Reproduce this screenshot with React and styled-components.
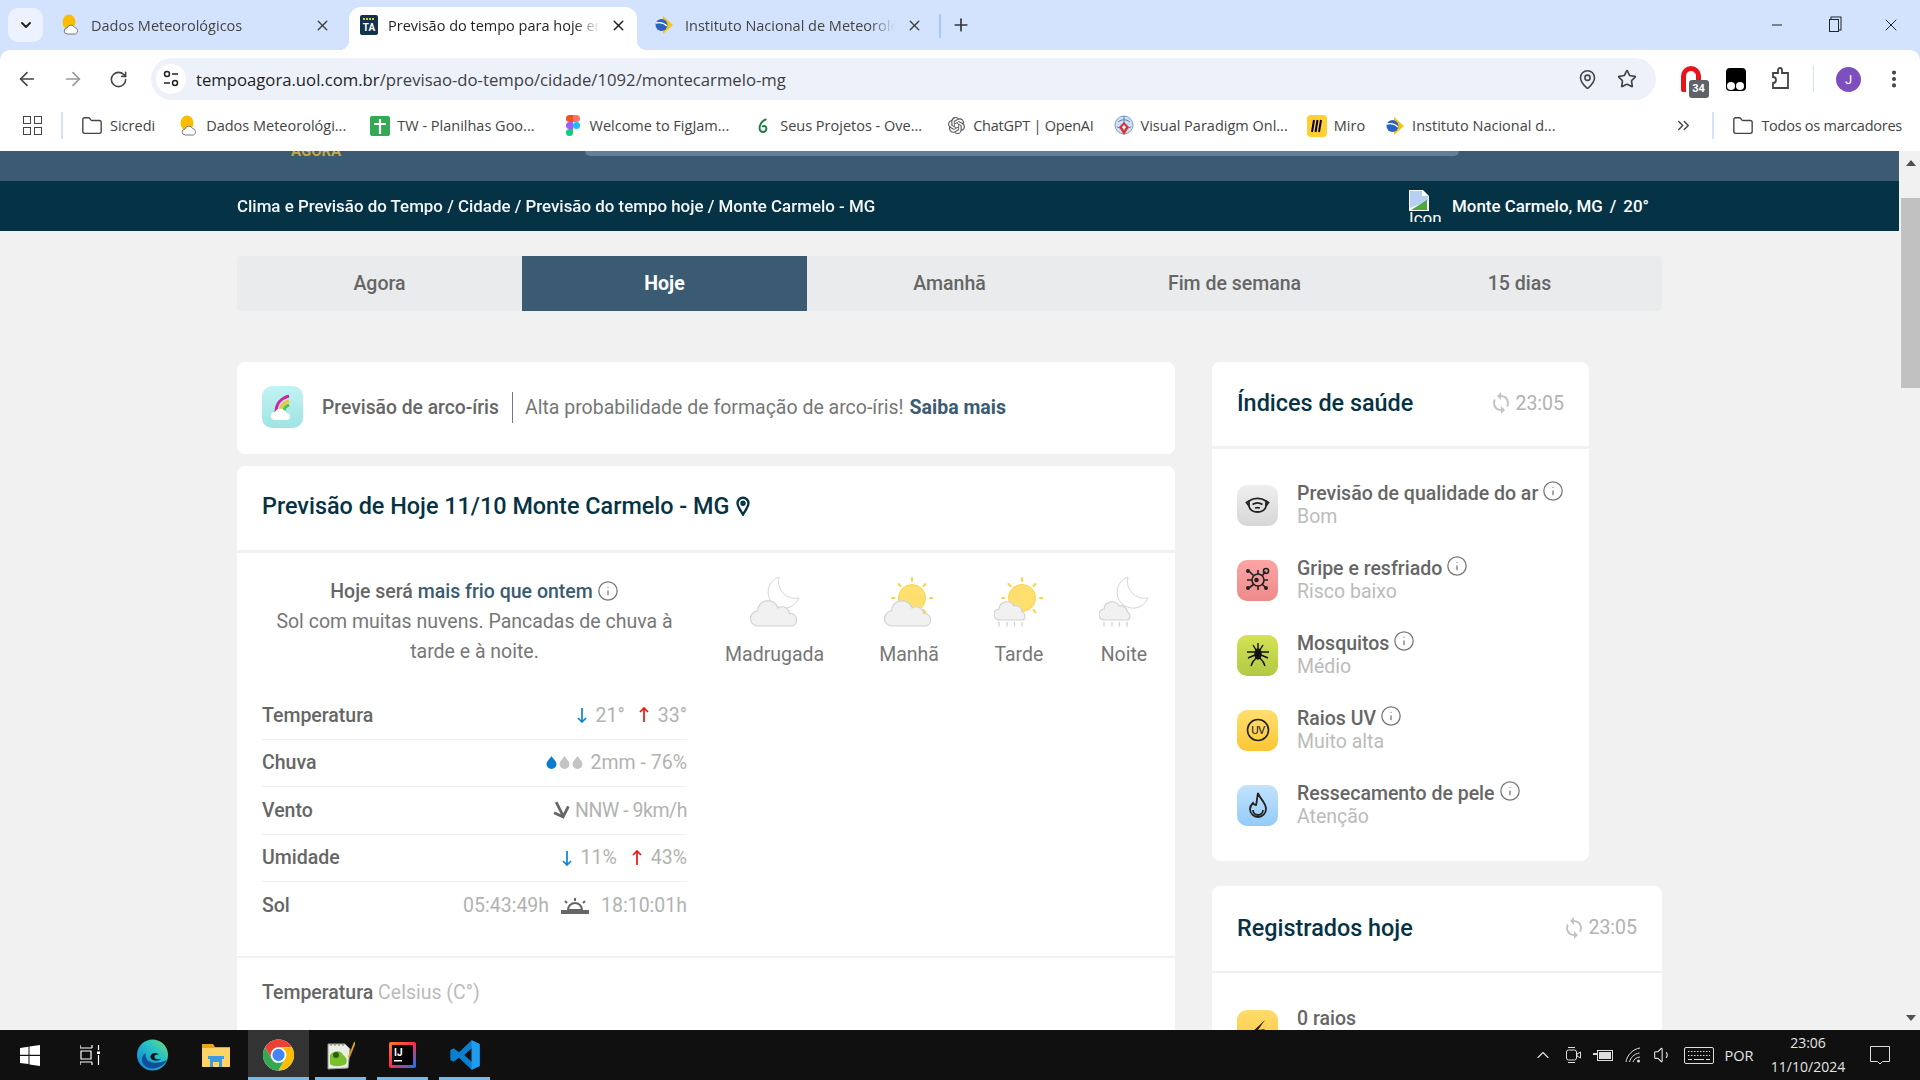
import styled, { createGlobalStyle } from "styled-components";
import {
  ArrowLeft,
  ArrowRight,
  ChevronDown,
  ChevronUp,
  ChevronsRight,
  EllipsisVertical,
  Folder,
  Info,
  MapPin,
  Minus,
  Plus,
  RotateCw,
  Star,
  Volume1,
  X,
} from "lucide-react";
import { MdSync } from "react-icons/md";
import { SiOpenai } from "react-icons/si";

const GlobalStyle = createGlobalStyle`
  html, body { margin: 0; padding: 0; overflow: hidden; background: #f1f1f1; }
  * { box-sizing: border-box; }
`;

/* favicons and small drawings */

const SunCloudFav = () => (
  <svg width="18" height="22" viewBox="0 0 18 22">
    <ellipse cx="7" cy="8" rx="6.5" ry="7.5" fill="#fbbc04" />
    <path d="M5.500 20a3 3 0 0 1-.5-6 4 4 0 0 1 7.500-.5 3.400 3.400 0 0 1 1 6.500z" fill="#fff" stroke="#777" />
  </svg>
);

const InmetFav = () => (
  <svg width="20" height="20" viewBox="0 0 20 20">
    <path d="M9 1l10 9-10 9z" fill="#f5c518" />
    <circle cx="7.500" cy="10" r="6" fill="#2a62c4" />
    <path d="M2 8c4-1 8 0 11 3" stroke="#fff" strokeWidth="1.400" fill="none" />
  </svg>
);

const TaFav = () => (
  <svg width="18" height="20" viewBox="0 0 18 20">
    <rect width="18" height="20" rx="2" fill="#12344a" />
    <path d="M3 4h12" stroke="#e5c14a" strokeWidth="2" strokeDasharray="2 1" />
    <text x="9" y="16" fontSize="10" fontWeight="700" fill="#fff" textAnchor="middle" fontFamily="Roboto, sans-serif">TA</text>
  </svg>
);

const SheetsFav = () => (
  <svg width="20" height="20" viewBox="0 0 20 20">
    <rect width="20" height="20" rx="2" fill="#34a853" />
    <path d="M10 3v15M4 8h12" stroke="#fff" strokeWidth="2.200" />
  </svg>
);

const FigmaFav = () => (
  <svg width="14" height="21" viewBox="0 0 14 21">
    <path d="M3.500 0H7v7H3.500a3.500 3.500 0 0 1 0-7z" fill="#f24e1e" />
    <path d="M7 0h3.500a3.500 3.500 0 0 1 0 7H7z" fill="#ff7262" />
    <path d="M3.500 7H7v7H3.500a3.500 3.500 0 0 1 0-7z" fill="#a259ff" />
    <circle cx="10.500" cy="10.500" r="3.500" fill="#1abcfe" />
    <path d="M3.500 14H7v3.500a3.500 3.500 0 1 1-3.500-3.500z" fill="#0acf83" />
  </svg>
);

const LeafFav = () => (
  <svg width="12" height="20" viewBox="0 0 14 20">
    <path d="M11 2C6 4 3 8 3 13a4 4 0 1 0 8 0c0-3-3-4-5-2" fill="none" stroke="#1d7a45" strokeWidth="2.200" />
  </svg>
);

const VpFav = () => (
  <svg width="20" height="22" viewBox="0 0 20 22">
    <circle cx="10" cy="10" r="9" fill="#cfe0f2" stroke="#7f9fc4" />
    <path d="M4 7c4-3 8-3 12 0M3 12c4 2 10 2 14 0M10 1v18" stroke="#5a84b8" fill="none" />
    <path d="M10 7l5 5-5 8-5-8z" fill="#d8323c" />
    <path d="M10 10l2 2-2 3-2-3z" fill="#fff" />
  </svg>
);

const MiroFav = () => (
  <svg width="20" height="22" viewBox="0 0 20 22">
    <rect width="20" height="22" rx="4" fill="#ffd02f" />
    <path d="M7 5L5 17M10.500 5L8.500 17M14 5l-2 12" stroke="#050038" strokeWidth="2" />
  </svg>
);

const TaskViewIcon = () => (
  <svg width="20" height="20" viewBox="0 0 20 20" fill="none" stroke="#fff" strokeWidth="1.200">
    <path d="M0 3h12M0 3V0M12 3V0M1 6h10v8H1zM0 17h12M0 17v3M12 17v3" />
    <path d="M18.500 0v5M18.500 10v10" />
    <rect x="17" y="6.500" width="3" height="2.500" fill="#fff" stroke="none" />
  </svg>
);

const WindowsIcon = () => (
  <svg width="20" height="21" viewBox="0 0 20 21" fill="#fff">
    <path d="M0 3l8.500-1.200v8H0zM9.500 1.600L20 0v9.800H9.500zM0 11h8.500v8L0 17.900zM9.500 11H20v10L9.500 19.400z" />
  </svg>
);

const EdgeIcon = () => (
  <svg width="31" height="32" viewBox="0 0 32 32">
    <defs>
      <linearGradient id="edgeA" x1="0" y1="1" x2="1" y2="0">
        <stop offset="0" stopColor="#0c7fd6" />
        <stop offset="0.600" stopColor="#27c2c8" />
        <stop offset="1" stopColor="#6fdc6b" />
      </linearGradient>
    </defs>
    <circle cx="16" cy="16" r="16" fill="url(#edgeA)" />
    <path d="M31 21c-3 7-13 11-20 8C4 26 3 18 9 14c-1 5 2 10 9 10 5 0 10-1 13-3z" fill="#0f4f9a" />
    <path d="M14 17c1-4 7-4 9-1-3-1-5 0-5 2 0 2 3 3 7 2-3 3-12 2-11-3z" fill="#111" />
  </svg>
);

const ExplorerIcon = () => (
  <svg width="28" height="24" viewBox="0 0 28 24">
    <path d="M0 1h11l2 3h15v18a2 2 0 0 1-2 2H1a1 1 0 0 1-1-1z" fill="#e6a818" />
    <rect y="5" width="28" height="19" rx="1" fill="#ffd466" />
    <path d="M8 24v-8h12v8h-3v-5h-6v5z" fill="#3f9be0" />
    <rect x="6" y="13" width="16" height="3" fill="#3f9be0" />
  </svg>
);

const ChromeIcon = () => (
  <svg width="31" height="32" viewBox="0 0 48 48">
    <circle cx="24" cy="24" r="24" fill="#fff" />
    <path d="M24 12h20.800A24 24 0 0 0 3.200 12l10.400 18A12 12 0 0 1 24 12z" fill="#ea4335" />
    <path d="M13.600 30L3.200 12A24 24 0 0 0 24 48l10.400-18a12 12 0 0 1-20.800 0z" fill="#34a853" />
    <path d="M34.400 30L24 48a24 24 0 0 0 20.800-36H24a12 12 0 0 1 10.400 18z" fill="#fbbc04" />
    <circle cx="24" cy="24" r="9.500" fill="#4285f4" />
  </svg>
);

const NotepadIcon = () => (
  <svg width="28" height="29" viewBox="0 0 28 29">
    <path d="M1 3h17l5 5-2 19-20 1z" fill="#e9efe2" stroke="#999" />
    <path d="M4 2v3M8 2v3M12 2v3M16 2v3" stroke="#777" />
    <path d="M3 14c5-6 12-4 13 0 3 2 5 5 3 9-5 3-13 3-16 0z" fill="#7ac02c" />
    <circle cx="9" cy="14" r="3" fill="#2b5d12" />
    <path d="M22 16L28 1" stroke="#d99a1e" strokeWidth="2" />
  </svg>
);

const IdeaIcon = () => (
  <svg width="27" height="26" viewBox="0 0 27 26">
    <defs>
      <linearGradient id="ideaA" x1="0" y1="0" x2="1" y2="1">
        <stop offset="0" stopColor="#fc801d" />
        <stop offset="0.500" stopColor="#fe2857" />
        <stop offset="1" stopColor="#087cfa" />
      </linearGradient>
    </defs>
    <rect width="27" height="26" rx="2" fill="url(#ideaA)" />
    <rect x="3" y="3" width="21" height="20" fill="#000" />
    <text x="5" y="14" fontSize="10" fontWeight="700" fill="#fff" fontFamily="Roboto, sans-serif">IJ</text>
    <rect x="5" y="18" width="8" height="1.500" fill="#fff" />
  </svg>
);

const VsCodeIcon = () => (
  <svg width="34" height="32" viewBox="0 0 24 24">
    <path fillRule="evenodd" d="M17 1l6 2.800v16.400L17 23 7.500 14l-4 3L1 15.800V8.200L3.500 7l4 3zM17 7l-5.500 5 5.500 5z" fill="#0a7fd0" />
    <path fillRule="evenodd" d="M17 1l6 2.800v16.400L17 23z" fill="#1f9cf0" />
  </svg>
);

const MoonShape = ({ x, y }) => (
  <path
    transform={`translate(${x} ${y})`}
    d="M11 0A16 16 0 1 0 31 21 17 17 0 0 1 11 0z"
    fill="#fff"
    stroke="#d6d6d6"
  />
);

const SunShape = () => (
  <g>
    <circle cx="28" cy="21" r="13.500" fill="#ffe06f" stroke="#fcd24a" />
    <g stroke="#fcd24a" strokeWidth="2" strokeLinecap="round">
      <path d="M28 1v3M14.500 7l2 2M41.500 7l-2 2M8 21h2.500M46 21h2.500M39.500 33l2 2.500" />
    </g>
  </g>
);

const BigCloud = () => (
  <path
    d="M8 49a7.500 7.500 0 0 1-1-15 10.500 10.500 0 0 1 20.500-3 7.500 7.500 0 0 1 11.500 5.500 6.500 6.500 0 0 1 3 12.500z"
    transform="translate(0.500 0)"
    fill="#f1f1f1"
    stroke="#d2d2d2"
    strokeWidth="1.200"
  />
);

const RainCloud = () => (
  <g>
    <path
      d="M6 43a5.500 5.500 0 0 1-1-11 8 8 0 0 1 15-3 6 6 0 0 1 8 5.500 5 5 0 0 1 1 8.500z"
      fill="#f1f1f1"
      stroke="#d2d2d2"
      strokeWidth="1.200"
    />
    <path d="M5 45v4.500M13 45v4.500M20.500 45v4.500M28 45v4.500" stroke="#d2d2d2" strokeWidth="1.300" />
  </g>
);

const WeatherIcon = ({ kind }) => (
  <svg width="50" height="50" viewBox="0 0 50 50">
    {kind === "moonCloud" && (
      <>
        <MoonShape x={18} y={0} />
        <BigCloud />
      </>
    )}
    {kind === "sunCloud" && (
      <>
        <SunShape />
        <BigCloud />
      </>
    )}
    {kind === "sunRain" && (
      <>
        <SunShape />
        <RainCloud />
      </>
    )}
    {kind === "moonRain" && (
      <>
        <MoonShape x={18} y={0} />
        <RainCloud />
      </>
    )}
  </svg>
);

const RainbowIcon = () => (
  <svg width="24" height="28" viewBox="0 0 24 28" fill="none">
    <path d="M5 19c0-8 5-14 13-16" stroke="#d61fa0" strokeWidth="3" />
    <path d="M9 19c0-6 4-10 9-11" stroke="#f4c430" strokeWidth="3" />
    <path d="M13 18c0-3 2-5 5-6" stroke="#58c14a" strokeWidth="3" />
    <path d="M4 27a4 4 0 0 1 0-8 6 6 0 0 1 11 1 3.500 3.500 0 0 1 1 7z" fill="#fff" />
  </svg>
);

const MaskIcon = () => (
  <svg width="25" height="19" viewBox="0 0 25 19" fill="none" stroke="#222" strokeWidth="1.800">
    <path d="M4 5c5-3.500 12-3.500 17 0v5c-1 8-16 8-17 0z" />
    <path d="M7.500 8.500c3-2 7-2 10 0M10 12c2-.7 3-.7 5 0M4 5L1.500 6.500 4 10M21 5l2.500 1.500L21 10" />
  </svg>
);

const VirusIcon = () => (
  <svg width="26" height="26" viewBox="0 0 26 26" fill="none" stroke="#222" strokeWidth="1.600">
    <circle cx="13" cy="13" r="6" fill="#f3989a" />
    <path d="M13 7V3M13 19v4M7 13H2M19 13h4M8.500 8.500l-4-4M17.500 8.500l3-4M8.500 17.500l-4 3M17.500 17.500l3 3" />
    <circle cx="21" cy="4" r="2.500" />
    <circle cx="3" cy="4" r="1.200" fill="#222" />
    <circle cx="3" cy="21" r="1.200" fill="#222" />
    <circle cx="21" cy="21" r="1.200" fill="#222" />
    <circle cx="11.500" cy="13" r="1.500" fill="#222" />
  </svg>
);

const MosquitoIcon = () => (
  <svg width="22" height="24" viewBox="0 0 22 24" fill="none" stroke="#111" strokeWidth="1.400">
    <ellipse cx="11" cy="11" rx="3" ry="5" fill="#111" />
    <path d="M11 0v6M6 2l3 5M16 2l-3 5M0 9h8M22 9h-8M1 15l7-3M21 15l-7-3M4 23c1-4 3-6 5-8M18 23c-1-4-3-6-5-8" />
  </svg>
);

const UvBadge = () => (
  <svg width="24" height="24" viewBox="0 0 24 24">
    <circle cx="12" cy="12" r="10.500" fill="none" stroke="#222" strokeWidth="1.600" />
    <text x="12" y="16" fontSize="11.500" textAnchor="middle" fill="#222" fontFamily="Roboto, sans-serif" letterSpacing="-0.700">UV</text>
  </svg>
);

const DropLineIcon = () => (
  <svg width="20" height="26" viewBox="0 0 20 26" fill="none" stroke="#222" strokeWidth="1.800">
    <path d="M10 1c1 5 8 9 8 16a8 8 0 0 1-16 0c0-3 2-5 3-6 1 2 2 2 3 2 1-3 1-8 2-12z" />
    <path d="M5 18a5 5 0 0 0 10 0" />
  </svg>
);

const BoltIcon = () => (
  <svg width="26" height="26" viewBox="0 0 26 26">
    <path d="M20 3L4 18l8-1-4 8 12-13-7 1z" fill="#222" />
  </svg>
);

const DropIcon = ({ on }) => (
  <svg width="11" height="13" viewBox="0 0 11 13">
    <path d="M5.500 0C7 3 10.500 5 10.500 8a5 5 0 0 1-10 0C.5 5 4 3 5.500 0z" fill={on ? "#0a7dd1" : "#c4c4c4"} />
  </svg>
);

const WindIcon = () => (
  <svg width="17" height="18" viewBox="0 0 16 17" fill="none" stroke="#666" strokeWidth="2.600">
    <path d="M3 1l6.500 13M1 11l8.500 4 5-10" />
  </svg>
);

const SunriseIcon = () => (
  <svg width="28" height="16" viewBox="0 0 28 16">
    <path d="M7 12a7 7 0 0 1 14 0z" fill="none" stroke="#666" strokeWidth="2" />
    <path d="M14 0v3M4 3l2 2M24 3l-2 2" stroke="#666" strokeWidth="2" />
    <rect y="12" width="28" height="4" fill="#666" />
  </svg>
);

const BrokenImage = () => (
  <svg width="22" height="21" viewBox="0 0 22 21">
    <path d="M0 0h14l6 6v15H0z" fill="#fff" />
    <path d="M1 1h12v5h6v5L1 18z" fill="#b7d0f2" />
    <path d="M2 20l16-10v10z" fill="#4fa83d" />
  </svg>
);

const Arrow = ({ up }) => (
  <svg width="10" height="16" viewBox="0 0 10 16" fill="none" stroke={up ? "#e8170f" : "#0a84d6"} strokeWidth="1.700">
    <path d={up ? "M5 15V1M1 5l4-4 4 4" : "M5 1v14M1 11l4 4 4-4"} />
  </svg>
);

/* browser chrome */

const Window = styled.div`
  width: 1920px;
  height: 1080px;
  display: flex;
  flex-direction: column;
  overflow: hidden;
  font-family: Roboto, "Liberation Sans", sans-serif;
`;

const TabStrip = styled.div`
  height: 50px;
  flex: none;
  background: #d3e3fd;
  display: flex;
  align-items: flex-start;
  padding-left: 8px;
  font-family: "Open Sans", "Liberation Sans", sans-serif;
`;

const TabListButton = styled.div`
  width: 35px;
  height: 34px;
  margin-top: 8px;
  margin-right: 10px;
  border-radius: 10px;
  background: #edf3fe;
  display: flex;
  align-items: center;
  justify-content: center;
  color: #222;
`;

const Tab = styled.div`
  position: relative;
  width: 288px;
  height: 43px;
  margin-top: 7px;
  margin-right: 8px;
  padding: 0 10px 7px ${({ $active }) => ($active ? 11 : 9)}px;
  display: flex;
  align-items: center;
  gap: ${({ $active }) => ($active ? 10 : 11)}px;
  border-radius: 12px 12px 0 0;
  background: ${({ $active }) => ($active ? "#fff" : "transparent")};
  color: ${({ $active }) => ($active ? "#1f1f1f" : "#444")};
  font-size: 14.500px;

  ${({ $active }) =>
    $active &&
    `
    &::before, &::after {
      content: "";
      position: absolute;
      bottom: 0;
      width: 10px;
      height: 10px;
    }
    &::before { left: -10px; background: radial-gradient(circle at 0 0, transparent 10px, #fff 10.5px); }
    &::after { right: -10px; background: radial-gradient(circle at 100% 0, transparent 10px, #fff 10.5px); }
  `}
`;

const TabTitle = styled.div`
  flex: 1;
  white-space: nowrap;
  overflow: hidden;
  -webkit-mask-image: linear-gradient(to right, #000 88%, transparent);
  mask-image: linear-gradient(to right, #000 88%, transparent);
`;

const TabSep = styled.div`
  width: 2px;
  height: 24px;
  margin: 14px 0 0 -2px;
  background: #a8c7fa;
`;

const NewTab = styled.div`
  margin: 15px 0 0 10px;
  color: #333;
  display: flex;
`;

const WindowControls = styled.div`
  margin-left: auto;
  padding-right: 1px;
  display: flex;
  color: #222;
`;

const WindowButton = styled.div`
  width: 57px;
  height: 50px;
  display: flex;
  align-items: center;
  justify-content: center;
`;

const RestoreGlyph = styled.div`
  width: 10px;
  height: 13px;
  border: 1.500px solid #222;
  box-shadow: 2px -2px 0 -0.500px #d3e3fd, 2px -2px 0 0.500px #222;
`;

const ChromeBackground = styled.div`
  flex: none;
  background: #d3e3fd;
`;

const Toolbar = styled.div`
  height: 50px;
  padding: 8px 0 0 4px;
  background: #fff;
  border-radius: 10px 10px 0 0;
  display: flex;
`;

const NavSlot = styled.div`
  width: ${({ $w }) => $w || 46}px;
  height: 42px;
  flex: none;
  display: flex;
  align-items: center;
  justify-content: center;
  color: ${({ $dim }) => ($dim ? "#999" : "#444")};
`;

const AddressBar = styled.div`
  width: 1505px;
  height: 42px;
  margin-left: 10px;
  margin-right: 12px;
  padding: 0 10px 0 5px;
  border-radius: 21px;
  background: #edf2fa;
  display: flex;
  align-items: center;
  flex: none;
  font-family: "Open Sans", "Liberation Sans", sans-serif;
  font-size: 16.700px;
  color: #1f1f1f;
`;

const SiteInfo = styled.div`
  width: 30px;
  height: 30px;
  margin-right: 10px;
  border-radius: 50%;
  background: #fff;
  display: flex;
  align-items: center;
  justify-content: center;
`;

const UrlHost = styled.span``;

const UrlPath = styled.span`
  color: #3d4043;
`;

const AddressActions = styled.div`
  margin-left: auto;
  display: flex;
  color: #444;
`;

const ExtBadgeWrap = styled.div`
  position: relative;
  width: 20px;
  height: 26px;
  border-radius: 10px 10px 2px 2px;
  border: 5px solid #e8141c;
  border-bottom-width: 0;
`;

const ExtBadge = styled.span`
  position: absolute;
  left: 3px;
  top: 9px;
  width: 20px;
  height: 18px;
  border-radius: 3px;
  background: #5f6368;
  color: #fff;
  font-size: 11px;
  font-weight: 700;
  line-height: 18px;
  text-align: center;
`;

const TamperBox = styled.div`
  width: 20px;
  height: 23px;
  border-radius: 4px;
  background: #000;
  display: flex;
  align-items: flex-end;
  justify-content: center;
  padding-bottom: 1px;
  gap: 1px;
`;

const TamperEye = styled.span`
  width: 8px;
  height: 8px;
  border-radius: 50%;
  background: #fff;
`;

const ToolbarSep = styled.div`
  width: 1px;
  height: 27px;
  margin: 7px 12px 0 10px;
  background: #d3e3fd;
`;

const Avatar = styled.div`
  width: 25px;
  height: 25px;
  border-radius: 50%;
  background: #7d4fbe;
  color: #fff;
  font-size: 13px;
  display: flex;
  align-items: center;
  justify-content: center;
`;

const BookmarkBar = styled.div`
  height: 51px;
  flex: none;
  background: #fff;
  padding-left: 23px;
  display: flex;
  align-items: center;
  font-family: "Open Sans", "Liberation Sans", sans-serif;
  font-size: 14.500px;
  color: #444;
`;

const AppsGrid = styled.div`
  width: 19px;
  height: 19px;
  display: grid;
  grid-template-columns: 8px 8px;
  gap: 3px;
`;

const AppsCell = styled.span`
  border: 1.500px solid #444;
`;

const BarSep = styled.div`
  width: 2px;
  height: 27px;
  margin: 0 18px 0 19px;
  background: #d3e3fd;
  flex: none;
`;

const Bookmarks = styled.div`
  display: flex;
  align-items: center;
  gap: 24px;
`;

const Bookmark = styled.div`
  display: flex;
  align-items: center;
  gap: 7px;
  margin-left: ${({ $ml }) => $ml || 0}px;
  white-space: nowrap;
  letter-spacing: ${({ $tight }) => ($tight ? "-0.250px" : "normal")};
`;

const FavBox = styled.span`
  width: ${({ $w }) => $w || 20}px;
  height: 22px;
  flex: none;
  display: flex;
  align-items: center;
  justify-content: center;
`;

const BookmarksEnd = styled.div`
  margin-left: auto;
  padding-right: 18px;
  display: flex;
  align-items: center;
`;

/* page */

const Viewport = styled.div`
  flex: 1;
  min-height: 0;
  display: flex;
`;

const Page = styled.div`
  flex: 1;
  min-width: 0;
  overflow: hidden;
  background: #f1f1f1;
`;

const ScrollTrack = styled.div`
  width: 21px;
  flex: none;
  background: #f1f1f1;
  display: flex;
  flex-direction: column;
`;

const ScrollArrow = styled.div`
  height: 24px;
  flex: none;
  display: flex;
  align-items: center;
  justify-content: center;
  margin-top: ${({ $down }) => ($down ? "auto" : 0)};
  padding-left: 2px;
  &::before {
    content: "";
    border-left: 5px solid transparent;
    border-right: 5px solid transparent;
    ${({ $down }) => ($down ? "border-top" : "border-bottom")}: 6px solid #505050;
  }
`;

const ScrollThumb = styled.div`
  height: 190px;
  margin: 23px 0 0 2px;
  background: #c1c1c1;
`;

const TopHeader = styled.div`
  height: 30px;
  overflow: hidden;
  background: #3a5b72;
  padding-left: 291px;
  display: flex;
  align-items: flex-start;
`;

const LogoWord = styled.div`
  width: 52px;
  margin-top: -7px;
  font-size: 15px;
  line-height: 15px;
  font-weight: 700;
  color: #c9a93a;
`;

const SearchEdge = styled.div`
  width: 874px;
  height: 5px;
  margin-left: 242px;
  border-radius: 0 0 6px 6px;
  background: #628198;
`;

const BreadcrumbBar = styled.div`
  height: 50px;
  padding: 0 250px 0 237px;
  background: #053345;
  display: flex;
  align-items: center;
  justify-content: space-between;
  color: #fff;
  font-size: 16.900px;
  font-weight: 500;
`;

const Breadcrumb = styled.div`
  opacity: 0.96;
`;

const CurrentCity = styled.div`
  display: flex;
  align-items: center;
`;

const BrokenIconBox = styled.div`
  width: 32px;
  height: 32px;
  margin-right: 11px;
  overflow: hidden;
  font-size: 17px;
  font-weight: 400;
  line-height: 13px;
`;

const CitySlash = styled.span`
  margin: 0 7px;
`;

const Content = styled.div`
  width: 1425px;
  margin: 25px auto 0;
`;

const PeriodTabs = styled.div`
  height: 55px;
  display: grid;
  grid-template-columns: repeat(5, 285px);
  background: #e9ebed;
  border-radius: 4px;
  overflow: hidden;
`;

const PeriodTab = styled.div`
  display: flex;
  align-items: center;
  justify-content: center;
  font-size: 19.500px;
  font-weight: ${({ $active }) => ($active ? 700 : 500)};
  color: ${({ $active }) => ($active ? "#fff" : "#666")};
  background: ${({ $active }) => ($active ? "#3a5b72" : "transparent")};
`;

const Columns = styled.div`
  margin-top: 51px;
  display: grid;
  grid-template-columns: 938px 450px;
  gap: 37px;
  align-items: start;
`;

const Column = styled.div`
  display: flex;
  flex-direction: column;
`;

const Card = styled.div`
  background: #fff;
  border-radius: 8px;
  width: ${({ $w }) => ($w ? `${$w}px` : "auto")};
  margin-bottom: ${({ $mb }) => $mb || 0}px;
`;

const RainbowCard = styled(Card)`
  height: 92px;
  padding: 0 25px 2px;
  display: flex;
  align-items: center;
  font-size: 19.500px;
`;

const RainbowBadge = styled.div`
  width: 41px;
  height: 42px;
  margin-right: 19px;
  border-radius: 10px;
  background: linear-gradient(#c2f3f3, #9fe3e3);
  display: flex;
  align-items: center;
  justify-content: center;
`;

const RainbowLabel = styled.div`
  font-size: 19.300px;
  font-weight: 500;
  color: #666;
  padding-right: 13px;
  height: 31px;
  line-height: 31px;
  border-right: 1px solid #777;
`;

const RainbowText = styled.div`
  margin-left: 12px;
  color: #777;
`;

const SaibaMais = styled.span`
  margin-left: 6px;
  font-weight: 700;
  color: #3a5b72;
`;

const ForecastTitle = styled.div`
  height: 87px;
  padding: 0 25px 4px;
  display: flex;
  align-items: center;
  gap: 6px;
  font-size: 23.400px;
  font-weight: 500;
  color: #053345;
  border-bottom: 3px solid #f1f1f1;
`;

const ForecastBody = styled.div`
  padding: 24px 0 26px 25px;
  display: flex;
  align-items: flex-start;
  gap: 38px;
  border-bottom: 2px solid #f1f1f1;
`;

const Summary = styled.div`
  width: 425px;
  flex: none;
`;

const SummaryText = styled.div`
  font-size: 19.500px;
  line-height: 30px;
  color: #777;
  text-align: center;
`;

const SummaryHead = styled.div`
  display: flex;
  align-items: center;
  justify-content: center;
  gap: 4px;
  font-weight: 500;
  color: #666;
`;

const Hot = styled.span`
  color: #3a5b72;
`;

const InfoMark = styled(Info).attrs({ size: 22, strokeWidth: 1.400 })`
  color: #777;
  flex: none;
  position: relative;
  top: ${({ $top }) => $top || 0}px;
`;

const DataRows = styled.div`
  margin-top: 25px;
`;

const DataRow = styled.div`
  height: 47.500px;
  display: flex;
  align-items: center;
  justify-content: space-between;
  font-size: 19.500px;
  border-bottom: ${({ $last }) => ($last ? "none" : "1px solid #efefef")};
`;

const RowLabel = styled.div`
  font-weight: 500;
  color: #666;
`;

const RowValue = styled.div`
  display: flex;
  align-items: center;
  gap: ${({ $gap }) => $gap || 0}px;
  color: #b2b2b2;
`;

const Pair = styled.span`
  display: flex;
  align-items: center;
  gap: 9px;
`;

const RainAmount = styled.span`
  margin-left: 6px;
`;

const WindAmount = styled.span`
  letter-spacing: -0.450px;
`;

const Periods = styled.div`
  display: flex;
  gap: 55px;
`;

const Period = styled.div`
  display: flex;
  flex-direction: column;
  align-items: center;
  gap: 17px;
  font-size: 19.500px;
  line-height: 21px;
  color: #777;
`;

const UnitLine = styled.div`
  padding: 24px 25px 70px;
  font-size: 19.500px;
  line-height: 21px;
  color: #bbb;
`;

const UnitName = styled.span`
  font-weight: 500;
  color: #666;
`;

const SideHead = styled.div`
  height: ${({ $h }) => $h}px;
  padding: 0 25px 2px;
  display: flex;
  align-items: center;
  justify-content: space-between;
  border-bottom: ${({ $line }) => $line}px solid #f1f1f1;
`;

const SideTitle = styled.div`
  font-size: 23.400px;
  font-weight: 500;
  color: #053345;
`;

const Updated = styled.div`
  display: flex;
  align-items: center;
  gap: 2px;
  font-size: 19.500px;
  color: #b2b2b2;
`;

const IndexList = styled.div`
  padding: ${({ $top }) => $top || 33}px 25px 33px;
  display: flex;
  flex-direction: column;
  gap: 29px;
`;

const IndexRow = styled.div`
  display: flex;
  align-items: center;
  gap: 19px;
`;

const IndexBadge = styled.div`
  width: 41px;
  height: 41px;
  flex: none;
  border-radius: 10px;
  background: linear-gradient(${({ $from }) => $from}, ${({ $to }) => $to});
  display: flex;
  align-items: center;
  justify-content: center;
`;

const IndexTitle = styled.div`
  display: flex;
  align-items: center;
  gap: 4px;
  font-size: 19.500px;
  line-height: 23px;
  font-weight: 500;
  color: #666;
  white-space: nowrap;
`;

const IndexValue = styled.div`
  font-size: 19.500px;
  line-height: 23px;
  color: #bbb;
`;

/* taskbar */

const Taskbar = styled.div`
  height: 50px;
  flex: none;
  background: #101010;
  display: flex;
  align-items: center;
  font-family: "Open Sans", "Liberation Sans", sans-serif;
  color: #e4e4e4;
`;

const TaskSlot = styled.div`
  width: ${({ $w }) => $w}px;
  height: 50px;
  flex: none;
  margin-right: ${({ $mr }) => $mr || 0}px;
  display: flex;
  align-items: center;
  justify-content: center;
  background: ${({ $active }) => ($active ? "#333" : "transparent")};
  border-bottom: 3px solid ${({ $open }) => ($open ? "#76b9ed" : "transparent")};
  border-top: 3px solid transparent;
`;

const Tray = styled.div`
  margin-left: auto;
  display: flex;
  align-items: center;
  padding-right: 30px;
`;

const TrayItem = styled.div`
  width: ${({ $w }) => $w || 30}px;
  display: flex;
  justify-content: center;
  font-size: 14.500px;
`;

const Clock = styled.div`
  width: 90px;
  margin-left: 5px;
  text-align: center;
  font-size: 14px;
  line-height: 24px;
`;

const Notify = styled.div`
  margin-left: 17px;
  display: flex;
`;

const TAB_TITLES = [
  { id: 1, fav: <SunCloudFav />, title: "Dados Meteorológicos" },
  { id: 2, fav: <TaFav />, title: "Previsão do tempo para hoje em Monte Carmelo", active: true },
  { id: 3, fav: <InmetFav />, title: "Instituto Nacional de Meteorologia" },
];

const BOOKMARKS = [
  { id: 1, w: 22, icon: <Folder size={22} strokeWidth={1.500} />, text: "Sicredi" },
  { id: 2, icon: <SunCloudFav />, text: "Dados Meteorológi..." },
  { id: 3, icon: <SheetsFav />, text: "TW - Planilhas Goo..." },
  { id: 4, ml: 4, icon: <FigmaFav />, text: "Welcome to FigJam..." },
  { id: 5, icon: <LeafFav />, text: "Seus Projetos - Ove..." },
  { id: 6, icon: <SiOpenai size={17} color="#555" />, text: "ChatGPT | OpenAI", tight: true },
  { id: 7, ml: -4, icon: <VpFav />, text: "Visual Paradigm Onl..." },
  { id: 8, ml: -5, icon: <MiroFav />, text: "Miro" },
  { id: 9, ml: -4, icon: <InmetFav />, text: "Instituto Nacional d..." },
];

const PERIODS = [
  { name: "Madrugada", kind: "moonCloud" },
  { name: "Manhã", kind: "sunCloud" },
  { name: "Tarde", kind: "sunRain" },
  { name: "Noite", kind: "moonRain" },
];

const HEALTH = [
  { name: "Previsão de qualidade do ar", value: "Bom", from: "#efefef", to: "#d6d6d6", icon: <MaskIcon /> },
  { name: "Gripe e resfriado", value: "Risco baixo", from: "#fba5a5", to: "#ee8a8a", icon: <VirusIcon /> },
  { name: "Mosquitos", value: "Médio", from: "#d5e254", to: "#b1c944", icon: <MosquitoIcon /> },
  { name: "Raios UV", value: "Muito alta", from: "#ffdf70", to: "#fdc534", icon: <UvBadge /> },
  { name: "Ressecamento de pele", value: "Atenção", from: "#c3e2fd", to: "#93cbf8", icon: <DropLineIcon /> },
];

export default function App() {
  return (
    <Window>
      <GlobalStyle />
      <TabStrip>
        <TabListButton>
          <ChevronDown size={16} strokeWidth={3} />
        </TabListButton>
        {TAB_TITLES.map((tab) => (
          <Tab key={tab.id} $active={tab.active}>
            {tab.fav}
            <TabTitle>{tab.title}</TabTitle>
            <X size={17} strokeWidth={2} />
          </Tab>
        ))}
        <TabSep />
        <NewTab>
          <Plus size={20} strokeWidth={2} />
        </NewTab>
        <WindowControls>
          <WindowButton>
            <Minus size={16} strokeWidth={1.500} />
          </WindowButton>
          <WindowButton>
            <RestoreGlyph />
          </WindowButton>
          <WindowButton>
            <X size={20} strokeWidth={1.200} />
          </WindowButton>
        </WindowControls>
      </TabStrip>

      <ChromeBackground>
        <Toolbar>
          <NavSlot>
            <ArrowLeft size={22} strokeWidth={1.800} />
          </NavSlot>
          <NavSlot $w={45} $dim>
            <ArrowRight size={22} strokeWidth={1.800} />
          </NavSlot>
          <NavSlot>
            <RotateCw size={19} strokeWidth={2} />
          </NavSlot>
          <AddressBar>
            <SiteInfo>
              <svg width="16" height="18" viewBox="0 0 16 18" fill="none" stroke="#222" strokeWidth="1.500">
                <circle cx="4" cy="4" r="2.500" />
                <path d="M9 4h6M1 13h6" />
                <circle cx="12" cy="13" r="2.500" />
              </svg>
            </SiteInfo>
            <UrlHost>tempoagora.uol.com.br</UrlHost>
            <UrlPath>/previsao-do-tempo/cidade/1092/montecarmelo-mg</UrlPath>
            <AddressActions>
              <NavSlot $w={39}>
                <MapPin size={21} strokeWidth={1.800} />
              </NavSlot>
              <NavSlot $w={39}>
                <Star size={20} strokeWidth={2} />
              </NavSlot>
            </AddressActions>
          </AddressBar>
          <NavSlot $w={45}>
            <ExtBadgeWrap>
              <ExtBadge>34</ExtBadge>
            </ExtBadgeWrap>
          </NavSlot>
          <NavSlot $w={45}>
            <TamperBox>
              <TamperEye />
              <TamperEye />
            </TamperBox>
          </NavSlot>
          <NavSlot $w={45}>
            <svg width="20" height="24" viewBox="0 0 20 24" fill="none" stroke="#444" strokeWidth="1.800">
              <path d="M2 6h5V3a2 2 0 0 1 4 0v3h6v15H2v-5a3 3 0 0 0 0-6z" />
            </svg>
          </NavSlot>
          <ToolbarSep />
          <NavSlot $w={45}>
            <Avatar>J</Avatar>
          </NavSlot>
          <NavSlot $w={45}>
            <EllipsisVertical size={22} strokeWidth={2.500} />
          </NavSlot>
        </Toolbar>
      </ChromeBackground>

      <BookmarkBar>
        <AppsGrid>
          <AppsCell />
          <AppsCell />
          <AppsCell />
          <AppsCell />
        </AppsGrid>
        <BarSep />
        <Bookmarks>
          {BOOKMARKS.map((mark) => (
            <Bookmark key={mark.id} $ml={mark.ml} $tight={mark.tight}>
              <FavBox $w={mark.w}>{mark.icon}</FavBox>
              {mark.text}
            </Bookmark>
          ))}
        </Bookmarks>
        <BookmarksEnd>
          <ChevronsRight size={19} strokeWidth={1.800} />
          <BarSep />
          <Bookmark $tight>
            <FavBox $w={22}>
              <Folder size={22} strokeWidth={1.500} />
            </FavBox>
            Todos os marcadores
          </Bookmark>
        </BookmarksEnd>
      </BookmarkBar>

      <Viewport>
        <Page>
          <TopHeader>
            <LogoWord>AGORA</LogoWord>
            <SearchEdge />
          </TopHeader>
          <BreadcrumbBar>
            <Breadcrumb>Clima e Previsão do Tempo / Cidade / Previsão do tempo hoje / Monte Carmelo - MG</Breadcrumb>
            <CurrentCity>
              <BrokenIconBox>
                <BrokenImage />
                Icon
              </BrokenIconBox>
              Monte Carmelo, MG
              <CitySlash>/</CitySlash>
              20°
            </CurrentCity>
          </BreadcrumbBar>

          <Content>
            <PeriodTabs>
              <PeriodTab>Agora</PeriodTab>
              <PeriodTab $active>Hoje</PeriodTab>
              <PeriodTab>Amanhã</PeriodTab>
              <PeriodTab>Fim de semana</PeriodTab>
              <PeriodTab>15 dias</PeriodTab>
            </PeriodTabs>

            <Columns>
              <Column>
                <RainbowCard $mb={12}>
                  <RainbowBadge>
                    <RainbowIcon />
                  </RainbowBadge>
                  <RainbowLabel>Previsão de arco-íris</RainbowLabel>
                  <RainbowText>
                    Alta probabilidade de formação de arco-íris!
                    <SaibaMais>Saiba mais</SaibaMais>
                  </RainbowText>
                </RainbowCard>

                <Card>
                  <ForecastTitle>
                    Previsão de Hoje 11/10 Monte Carmelo - MG
                    <svg width="14" height="20" viewBox="0 0 14 19" fill="none" stroke="#053345" strokeWidth="2.400">
                      <path d="M7 18C4 13 1.500 10 1.500 6.800a5.500 5.500 0 0 1 11 0C12.500 10 10 13 7 18z" />
                      <circle cx="7" cy="6.800" r="1.500" />
                    </svg>
                  </ForecastTitle>
                  <ForecastBody>
                    <Summary>
                      <SummaryText>
                        <SummaryHead>
                          <span>
                            Hoje será <Hot>mais frio que ontem</Hot>
                          </span>
                          <InfoMark $top={-1} />
                        </SummaryHead>
                        Sol com muitas nuvens. Pancadas de chuva à tarde e à noite.
                      </SummaryText>
                      <DataRows>
                        <DataRow>
                          <RowLabel>Temperatura</RowLabel>
                          <RowValue $gap={14}>
                            <Pair>
                              <Arrow />
                              21°
                            </Pair>
                            <Pair>
                              <Arrow up />
                              33°
                            </Pair>
                          </RowValue>
                        </DataRow>
                        <DataRow>
                          <RowLabel>Chuva</RowLabel>
                          <RowValue $gap={2}>
                            <DropIcon on />
                            <DropIcon />
                            <DropIcon />
                            <RainAmount>2mm - 76%</RainAmount>
                          </RowValue>
                        </DataRow>
                        <DataRow>
                          <RowLabel>Vento</RowLabel>
                          <RowValue $gap={5}>
                            <WindIcon />
                            <WindAmount>NNW - 9km/h</WindAmount>
                          </RowValue>
                        </DataRow>
                        <DataRow>
                          <RowLabel>Umidade</RowLabel>
                          <RowValue $gap={15}>
                            <Pair>
                              <Arrow />
                              11%
                            </Pair>
                            <Pair>
                              <Arrow up />
                              43%
                            </Pair>
                          </RowValue>
                        </DataRow>
                        <DataRow $last>
                          <RowLabel>Sol</RowLabel>
                          <RowValue $gap={12}>
                            05:43:49h
                            <SunriseIcon />
                            18:10:01h
                          </RowValue>
                        </DataRow>
                      </DataRows>
                    </Summary>
                    <Periods>
                      {PERIODS.map((period) => (
                        <Period key={period.name}>
                          <WeatherIcon kind={period.kind} />
                          {period.name}
                        </Period>
                      ))}
                    </Periods>
                  </ForecastBody>
                  <UnitLine>
                    <UnitName>Temperatura</UnitName> Celsius (C°)
                  </UnitLine>
                </Card>
              </Column>

              <Column>
                <Card $w={377} $mb={25}>
                  <SideHead $h={87} $line={3}>
                    <SideTitle>Índices de saúde</SideTitle>
                    <Updated>
                      <MdSync size={24} color="#c4c4c4" />
                      23:05
                    </Updated>
                  </SideHead>
                  <IndexList>
                    {HEALTH.map((item) => (
                      <IndexRow key={item.name}>
                        <IndexBadge $from={item.from} $to={item.to}>
                          {item.icon}
                        </IndexBadge>
                        <div>
                          <IndexTitle>
                            {item.name}
                            <InfoMark $top={-3} />
                          </IndexTitle>
                          <IndexValue>{item.value}</IndexValue>
                        </div>
                      </IndexRow>
                    ))}
                  </IndexList>
                </Card>

                <Card>
                  <SideHead $h={87} $line={2}>
                    <SideTitle>Registrados hoje</SideTitle>
                    <Updated>
                      <MdSync size={24} color="#c4c4c4" />
                      23:05
                    </Updated>
                  </SideHead>
                  <IndexList $top={34}>
                    <IndexRow>
                      <IndexBadge $from="#ffdc6e" $to="#fdc534">
                        <BoltIcon />
                      </IndexBadge>
                      <div>
                        <IndexTitle>0 raios</IndexTitle>
                        <IndexValue>Nenhum</IndexValue>
                      </div>
                    </IndexRow>
                  </IndexList>
                </Card>
              </Column>
            </Columns>
          </Content>
        </Page>
        <ScrollTrack>
          <ScrollArrow />
          <ScrollThumb />
          <ScrollArrow $down />
        </ScrollTrack>
      </Viewport>

      <Taskbar>
        <TaskSlot $w={60}>
          <WindowsIcon />
        </TaskSlot>
        <TaskSlot $w={60}>
          <TaskViewIcon />
        </TaskSlot>
        <TaskSlot $w={64}>
          <EdgeIcon />
        </TaskSlot>
        <TaskSlot $w={64}>
          <ExplorerIcon />
        </TaskSlot>
        <TaskSlot $w={61} $mr={6} $active $open>
          <ChromeIcon />
        </TaskSlot>
        <TaskSlot $w={51} $mr={11} $open>
          <NotepadIcon />
        </TaskSlot>
        <TaskSlot $w={51} $mr={11} $open>
          <IdeaIcon />
        </TaskSlot>
        <TaskSlot $w={51} $open>
          <VsCodeIcon />
        </TaskSlot>
        <Tray>
          <TrayItem>
            <ChevronUp size={20} strokeWidth={1.300} />
          </TrayItem>
          <TrayItem>
            <svg width="15" height="18" viewBox="0 0 15 18" fill="none" stroke="#ddd">
              <rect x="0.500" y="4" width="10" height="10" rx="2" />
              <path d="M11 8l3.500-2v6L11 10zM2 1.500h7M2 16.500h7" />
            </svg>
          </TrayItem>
          <TrayItem>
            <svg width="20" height="13" viewBox="0 0 20 13">
              <rect x="4.500" y="1.500" width="15" height="10" fill="none" stroke="#ddd" />
              <rect x="6" y="3" width="12" height="7" fill="#ddd" />
              <path d="M0 4h4v2H0z" fill="#ddd" />
            </svg>
          </TrayItem>
          <TrayItem>
            <svg width="16" height="16" viewBox="0 0 16 16" fill="none" stroke="#ddd">
              <path d="M1 15C2 8 8 2 15 1M4.500 15c1-4 4-8 10-9M8 15c.5-2 3-5 7-5" />
              <circle cx="13.500" cy="14" r="1.500" fill="#ddd" stroke="none" />
            </svg>
          </TrayItem>
          <TrayItem>
            <Volume1 size={20} strokeWidth={1.300} />
          </TrayItem>
          <TrayItem $w={42}>
            <svg width="30" height="17" viewBox="0 0 30 17" fill="none" stroke="#ddd">
              <rect x="0.500" y="0.500" width="29" height="16" rx="1.500" />
              <path d="M4 4.500h22M4 8.500h22" strokeDasharray="1.500 1.500" />
              <path d="M4 12.500h4M10 12.500h10M22 12.500h4" />
            </svg>
          </TrayItem>
          <TrayItem $w={38}>POR</TrayItem>
          <Clock>
            23:06
            <br />
            11/10/2024
          </Clock>
          <Notify>
            <svg width="20" height="20" viewBox="0 0 20 20" fill="none" stroke="#ddd">
              <path d="M0.500 1.500h19v15h-7l-2.500 2.500-2.500-2.500h-7z" />
            </svg>
          </Notify>
        </Tray>
      </Taskbar>
    </Window>
  );
}
